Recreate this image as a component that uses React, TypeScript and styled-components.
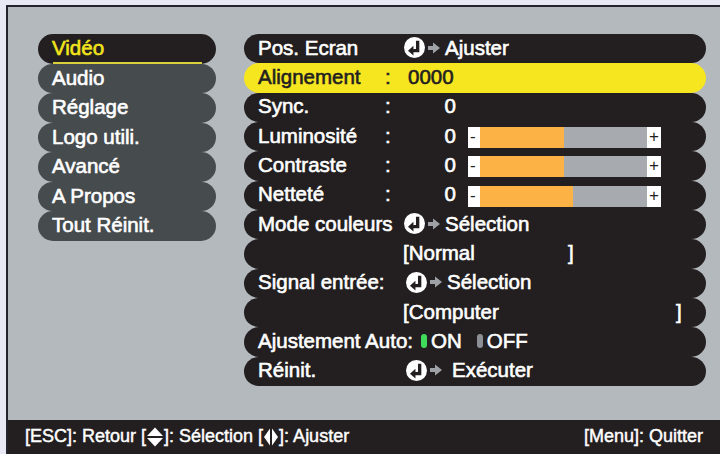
import React from 'react';
import styled, { createGlobalStyle, css } from 'styled-components';

const GlobalStyle = createGlobalStyle`
  html, body {
    margin: 0;
    padding: 0;
    background: #e9e9f6;
  }
  body {
    font-family: "Liberation Sans", Arial, sans-serif;
  }
`;

const Screen = styled.div`
  width: 720px;
  height: 454px;
  box-sizing: border-box;
  padding: 5px 0 0 6px;
  overflow: hidden;
`;

const Frame = styled.div`
  height: 100%;
  box-sizing: border-box;
  border-top: 2px solid #25242c;
  border-left: 2px solid #25242c;
  background: #b4b9be;
  display: flex;
  flex-direction: column;
`;

const Main = styled.div`
  flex: 1;
  display: flex;
  align-items: flex-start;
  gap: 28px;
  padding: 27px 14px 0 30px;
`;

const SideMenu = styled.div`
  width: 178px;
  display: flex;
  flex-direction: column;
`;

const MenuItem = styled.div<{ $active?: boolean }>`
  position: relative;
  height: 29.5px;
  line-height: 27.5px;
  border-radius: 15px;
  padding-left: 14px;
  font-size: 20.5px;
  -webkit-text-stroke: 0.6px currentColor;
  background: ${(p) => (p.$active ? '#231f20' : '#464b4e')};
  color: ${(p) => (p.$active ? '#f3e51c' : '#ffffff')};
  ${(p) =>
    p.$active &&
    css`
      &::after {
        content: '';
        position: absolute;
        left: 15px;
        right: 14px;
        bottom: 0;
        height: 2px;
        background: #d9d03c;
      }
    `}
`;

const Panel = styled.div`
  flex: 1;
  display: flex;
  flex-direction: column;
`;

const Row = styled.div<{ $selected?: boolean }>`
  height: 29.33px;
  box-sizing: border-box;
  padding-bottom: 2px;
  display: flex;
  align-items: center;
  border-radius: 15px;
  padding-left: 14px;
  font-size: 20.5px;
  -webkit-text-stroke: 0.6px currentColor;
  white-space: nowrap;
  background: ${(p) => (p.$selected ? '#f6e620' : '#231f20')};
  color: ${(p) => (p.$selected ? '#231f20' : '#ffffff')};
`;

const Label = styled.span<{ $w: number }>`
  width: ${(p) => p.$w}px;
  flex-shrink: 0;
`;

const Colon = styled.span`
  width: 23px;
  flex-shrink: 0;
`;

const Num = styled.span`
  width: 48px;
  text-align: right;
  flex-shrink: 0;
`;

const Action = styled.span<{ $gap?: number }>`
  display: flex;
  align-items: center;
  gap: 3px;
  & > span {
    margin-left: ${(p) => p.$gap ?? 2}px;
  }
`;

const Bracket = styled.span<{ $w: number }>`
  display: inline-block;
  width: ${(p) => p.$w}px;
`;

const Bar = styled.div`
  margin-left: 12px;
  margin-top: 4px;
  width: 193px;
  height: 21px;
  display: flex;
  -webkit-text-stroke: 0;
`;

const BarEnd = styled.div<{ $w: number; $left?: boolean }>`
  width: ${(p) => p.$w}px;
  box-sizing: border-box;
  background: #ffffff;
  color: #231f20;
  font-size: 17px;
  line-height: 20px;
  text-align: ${(p) => (p.$left ? 'left' : 'center')};
  padding-left: ${(p) => (p.$left ? 2 : 0)}px;
`;

const BarFill = styled.div`
  background: #fdb245;
`;

const BarRest = styled.div`
  flex: 1;
  background: #a7aaae;
`;

const Dot = styled.span<{ $on?: boolean }>`
  display: inline-block;
  width: 6px;
  height: 14px;
  border-radius: 3px;
  background: ${(p) => (p.$on ? '#3fdc5c' : '#8c9094')};
  margin: 0 4px 0 0;
  -webkit-text-stroke: 0;
`;

const Toggle = styled.span`
  display: flex;
  align-items: center;
  margin-left: 8px;
  & > b {
    font-weight: normal;
    margin-right: 15px;
  }
`;

const Footer = styled.div`
  height: 34px;
  flex-shrink: 0;
  box-sizing: border-box;
  padding: 0 17px 1px 17px;
  background: #231f20;
  color: #ffffff;
  font-size: 18px;
  -webkit-text-stroke: 0.45px currentColor;
  display: flex;
  align-items: center;
  justify-content: space-between;
  white-space: nowrap;
`;

const Hint = styled.span`
  display: flex;
  align-items: center;
  & svg {
    margin: 0 1px;
  }
`;

const EnterIcon = () => (
  <svg width="21" height="21" viewBox="0 0 20 20">
    <circle cx="10" cy="10" r="10" fill="#ffffff" />
    <path d="M13 3.5 V13 H8" stroke="#231f20" strokeWidth="3.2" fill="none" />
    <polygon points="3.8,13 9,8.4 9,17.6" fill="#231f20" />
  </svg>
);

const GreyArrow = () => (
  <svg width="12" height="12" viewBox="0 0 12 12">
    <rect x="0" y="4" width="6" height="4" fill="#9ea2a6" />
    <polygon points="5,0.5 12,6 5,11.5" fill="#9ea2a6" />
  </svg>
);

const UpDownIcon = () => (
  <svg width="16" height="20" viewBox="0 0 16 20">
    <polygon points="0,9 8,0.5 16,9" fill="#ffffff" />
    <polygon points="0,11 8,19.5 16,11" fill="#ffffff" />
  </svg>
);

const LeftRightIcon = () => (
  <svg width="14" height="18" viewBox="0 0 14 18">
    <polygon points="6,0.5 0,9 6,17.5" fill="#ffffff" />
    <polygon points="8,0.5 14,9 8,17.5" fill="#ffffff" />
  </svg>
);

const menu = ['Vidéo', 'Audio', 'Réglage', 'Logo utili.', 'Avancé', 'A Propos', 'Tout Réinit.'];

const Slider = ({ value }: { value: number }) => (
  <Bar>
    <BarEnd $w={12} $left>-</BarEnd>
    <BarFill style={{ width: value }} />
    <BarRest />
    <BarEnd $w={14}>+</BarEnd>
  </Bar>
);

const Go = ({ text, gap }: { text: string; gap?: number }) => (
  <Action $gap={gap}>
    <EnterIcon />
    <GreyArrow />
    <span>{text}</span>
  </Action>
);

export default function App() {
  return (
    <Screen>
      <GlobalStyle />
      <Frame>
        <Main>
          <SideMenu>
            {menu.map((m, i) => (
              <MenuItem key={m} $active={i === 0}>
                {m}
              </MenuItem>
            ))}
          </SideMenu>
          <Panel>
            <Row>
              <Label $w={146}>Pos. Ecran</Label>
              <Go text="Ajuster" />
            </Row>
            <Row $selected>
              <Label $w={127}>Alignement</Label>
              <Colon>:</Colon>
              <span>0000</span>
            </Row>
            <Row>
              <Label $w={127}>Sync.</Label>
              <Colon>:</Colon>
              <Num>0</Num>
            </Row>
            <Row>
              <Label $w={127}>Luminosité</Label>
              <Colon>:</Colon>
              <Num>0</Num>
              <Slider value={84} />
            </Row>
            <Row>
              <Label $w={127}>Contraste</Label>
              <Colon>:</Colon>
              <Num>0</Num>
              <Slider value={84} />
            </Row>
            <Row>
              <Label $w={127}>Netteté</Label>
              <Colon>:</Colon>
              <Num>0</Num>
              <Slider value={93} />
            </Row>
            <Row>
              <Label $w={146}>Mode couleurs</Label>
              <Go text="Sélection" />
            </Row>
            <Row>
              <Label $w={145} />
              <Bracket $w={165}>[Normal</Bracket>]
            </Row>
            <Row>
              <Label $w={148}>Signal entrée:</Label>
              <Go text="Sélection" />
            </Row>
            <Row>
              <Label $w={145} />
              <Bracket $w={273}>[Computer</Bracket>]
            </Row>
            <Row>
              <span>Ajustement Auto:</span>
              <Toggle>
                <Dot $on />
                <b>ON</b>
                <Dot />
                <b>OFF</b>
              </Toggle>
            </Row>
            <Row>
              <Label $w={148}>Réinit.</Label>
              <Go text="Exécuter" gap={7} />
            </Row>
          </Panel>
        </Main>
        <Footer>
          <Hint>
            [ESC]: Retour [<UpDownIcon />]: Sélection [<LeftRightIcon />]: Ajuster
          </Hint>
          <span>[Menu]: Quitter</span>
        </Footer>
      </Frame>
    </Screen>
  );
}
